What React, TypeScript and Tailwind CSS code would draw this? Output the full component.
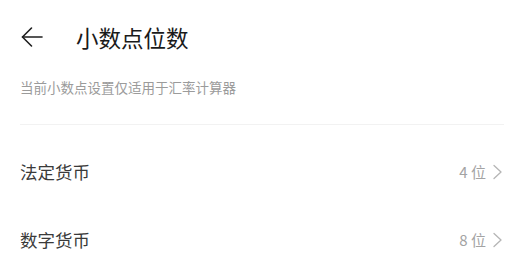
export default function App() {
  const font = { fontFamily: '"Noto Sans CJK SC", "Noto Sans", sans-serif' };
  const rows = [
    { label: "法定货币", value: "4 位" },
    { label: "数字货币", value: "8 位" },
  ];
  return (
    <div className="w-[524px] h-[271px] bg-white overflow-hidden" style={font}>
      <div className="h-[74px] flex items-center px-[20px]">
        <svg width="24" height="24" viewBox="0 0 24 24" className="text-[#1f1f1f]" fill="none" stroke="currentColor" strokeWidth="1.6" strokeLinecap="round" strokeLinejoin="round">
          <path d="M22 12H2.5" />
          <path d="M11.5 3L2.5 12l9 9" />
        </svg>
        <div className="ml-[32px] text-[22.5px] leading-none text-[#1a1a1a]">小数点位数</div>
      </div>
      <div className="px-[20px]">
        <div className="h-[26px] flex items-center text-[13.5px] text-[#9b9b9b]">当前小数点设置仅适用于汇率计算器</div>
        <div className="mt-[24px] h-px bg-[#f2f2f2]" />
        <div className="mt-[13px]">
          {rows.map((r) => (
            <div key={r.label} className="h-[68px] flex items-center justify-between">
              <div className="text-[17.5px] text-[#3a3a3a]">{r.label}</div>
              <div className="flex items-center text-[15px] text-[#a3a3a3]">
                <span>{r.value}</span>
                <svg width="11" height="16" viewBox="0 0 11 16" className="ml-[6px] mr-[1px]" fill="none" stroke="#b5b5b5" strokeWidth="1.3" strokeLinecap="round" strokeLinejoin="round">
                  <path d="M2 1.5l7 6.5-7 6.5" />
                </svg>
              </div>
            </div>
          ))}
        </div>
      </div>
    </div>
  );
}
